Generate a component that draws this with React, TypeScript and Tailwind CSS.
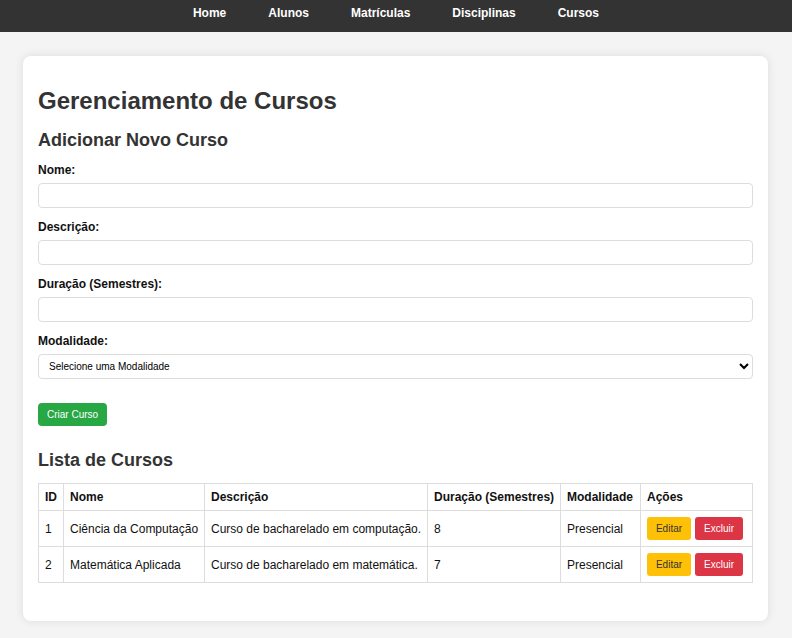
import React from 'react';

interface Curso {
  id: number;
  nome: string;
  descricao: string;
  duracao: number;
  modalidade: string;
}

const cursos: Curso[] = [
  {
    id: 1,
    nome: 'Ciência da Computação',
    descricao: 'Curso de bacharelado em computação.',
    duracao: 8,
    modalidade: 'Presencial',
  },
  {
    id: 2,
    nome: 'Matemática Aplicada',
    descricao: 'Curso de bacharelado em matemática.',
    duracao: 7,
    modalidade: 'Presencial',
  },
];

const links = ['Home', 'Alunos', 'Matrículas', 'Disciplinas', 'Cursos'];

const Field: React.FC<{ label: string; children: React.ReactNode }> = ({
  label,
  children,
}) => (
  <div className="mb-[12px]">
    <label className="block text-[12px] leading-[14px] font-bold text-[#111] mb-[6px]">
      {label}
    </label>
    {children}
  </div>
);

const inputClass =
  'block w-full h-[25px] border border-[#ddd] rounded-[4px] bg-white px-[8px] text-[10px] outline-none';

const App: React.FC = () => {
  return (
    <div
      className="min-h-[638px] bg-[#f4f4f4] text-[#333] pb-[17px]"
      style={{ fontFamily: '"Liberation Sans", Arial, sans-serif' }}
    >
      {/* Nav */}
      <nav className="h-[32px] bg-[#333] flex justify-center items-start pt-[5px]">
        <ul className="flex gap-[42px]">
          {links.map((l) => (
            <li key={l}>
              <a className="block text-white font-bold text-[12px] leading-[16px]" href="#">
                {l}
              </a>
            </li>
          ))}
        </ul>
      </nav>

      {/* Container */}
      <div className="ml-[23px] mr-[24px] mt-[24px] bg-white rounded-[8px] shadow-[0_0_10px_rgba(0,0,0,0.1)] px-[15px] pt-[15px] pb-[38px]">
        <h1 className="mt-[16px] text-[24px] leading-[28px] font-bold text-[#333]">
          Gerenciamento de Cursos
        </h1>
        <h2 className="mt-[15px] mb-[12px] text-[18px] leading-[21px] font-bold text-[#333]">
          Adicionar Novo Curso
        </h2>

        <form onSubmit={(e) => e.preventDefault()}>
          <Field label="Nome:">
            <input className={inputClass} type="text" />
          </Field>
          <Field label="Descrição:">
            <input className={inputClass} type="text" />
          </Field>
          <Field label="Duração (Semestres):">
            <input className={inputClass} type="number" />
          </Field>
          <div className="mb-[24px]">
            <label className="block text-[12px] leading-[14px] font-bold text-[#111] mb-[6px]">
              Modalidade:
            </label>
            <select
              className="block w-full h-[25px] border border-[#ddd] rounded-[4px] bg-white pl-[6px] pr-[4px] text-[10px] text-black outline-none"
              defaultValue=""
            >
              <option value="">Selecione uma Modalidade</option>
              <option value="Presencial">Presencial</option>
              <option value="EAD">EAD</option>
            </select>
          </div>
          <button
            type="submit"
            className="block h-[23px] px-[9px] bg-[#28a745] text-white text-[10px] rounded-[4px]"
          >
            Criar Curso
          </button>
        </form>

        <h2 className="mt-[24px] mb-[12px] text-[18px] leading-[21px] font-bold text-[#333]">
          Lista de Cursos
        </h2>

        <table className="w-full table-fixed border-collapse text-[12px] text-[#111]">
          <colgroup>
            <col className="w-[25px]" />
            <col className="w-[141px]" />
            <col className="w-[223px]" />
            <col className="w-[133px]" />
            <col className="w-[80px]" />
            <col />
          </colgroup>
          <thead>
            <tr className="h-[27px]">
              {['ID', 'Nome', 'Descrição', 'Duração (Semestres)', 'Modalidade', 'Ações'].map(
                (h) => (
                  <th
                    key={h}
                    className="border border-[#ddd] px-[6px] text-left font-bold whitespace-nowrap"
                  >
                    {h}
                  </th>
                )
              )}
            </tr>
          </thead>
          <tbody>
            {cursos.map((c) => (
              <tr key={c.id} className="h-[36px]">
                <td className="border border-[#ddd] px-[6px]">{c.id}</td>
                <td className="border border-[#ddd] px-[6px] whitespace-nowrap">{c.nome}</td>
                <td className="border border-[#ddd] px-[6px] whitespace-nowrap">{c.descricao}</td>
                <td className="border border-[#ddd] px-[6px]">{c.duracao}</td>
                <td className="border border-[#ddd] px-[6px]">{c.modalidade}</td>
                <td className="border border-[#ddd] px-[6px]">
                  <div className="flex gap-[4px]">
                    <button className="h-[23px] w-[44px] bg-[#ffc107] text-[#333] text-[10px] rounded-[3px]">
                      Editar
                    </button>
                    <button className="h-[23px] w-[48px] bg-[#dc3545] text-white text-[10px] rounded-[3px]">
                      Excluir
                    </button>
                  </div>
                </td>
              </tr>
            ))}
          </tbody>
        </table>
      </div>
    </div>
  );
};

export default App;
